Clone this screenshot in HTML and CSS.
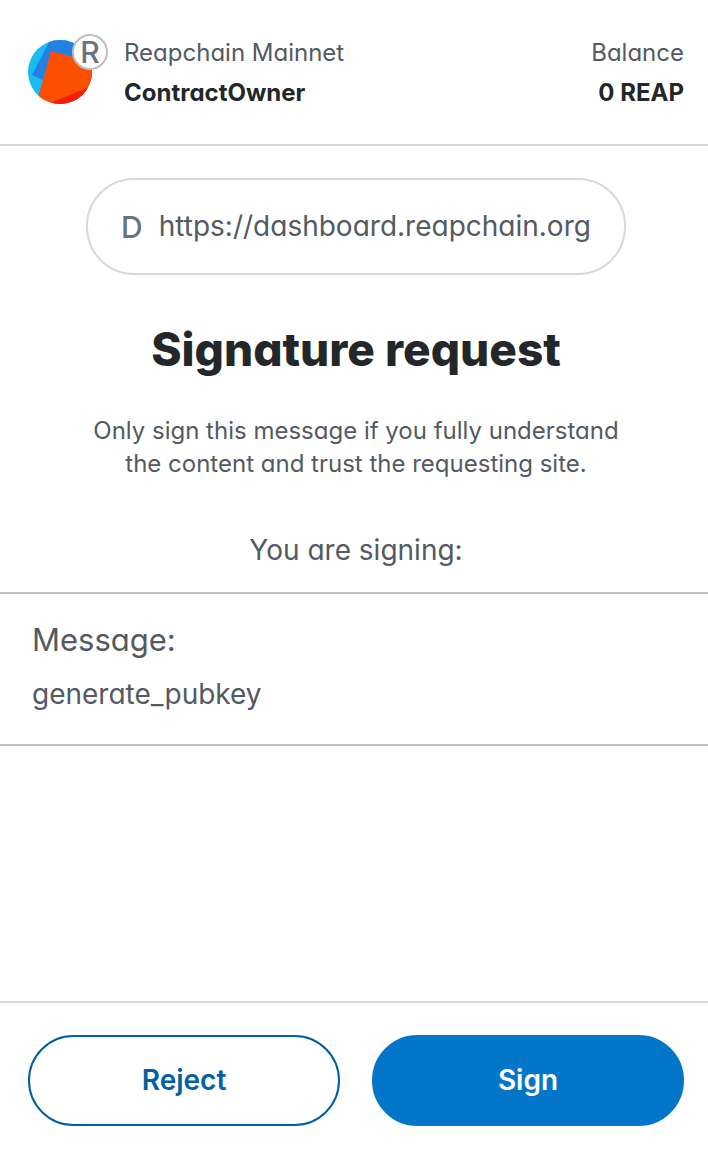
FILE: index.html
```html
<!DOCTYPE html>
<html lang="en">
<head>
<meta charset="utf-8">
<meta name="viewport" content="width=device-width, initial-scale=1">
<title>Signature request</title>
<link rel="stylesheet" href="styles.css">
</head>
<body>
<div class="request">
  <header class="account-bar">
    <div class="avatar">
      <svg class="avatar-art" viewBox="0 0 64 64" aria-hidden="true">
        <defs><clipPath id="disc"><circle cx="32" cy="32" r="32"/></clipPath></defs>
        <g clip-path="url(#disc)">
          <rect width="64" height="64" fill="#18bbf2"/>
          <path d="M22 0H64V40L35 50L4 35Z" fill="#2581e1"/>
          <path d="M23 11L64 22V64H7.500L11 54Z" fill="#fc5000"/>
          <path d="M20 64L64 46V64Z" fill="#fa1d00"/>
        </g>
      </svg>
      <span class="avatar-badge">R</span>
    </div>
    <div class="account">
      <span>Reapchain Mainnet</span>
      <strong>ContractOwner</strong>
    </div>
    <div class="account balance">
      <span>Balance</span>
      <strong>0 REAP</strong>
    </div>
  </header>
  <main class="content">
    <div class="origin">
      <span class="origin-icon">D</span>
      <span>https://dashboard.reapchain.org</span>
    </div>
    <h1 class="title">Signature request</h1>
    <p class="notice">Only sign this message if you fully understand<br>the content and trust the requesting site.</p>
    <p class="lead">You are signing:</p>
    <section class="message">
      <h2 class="message-label">Message:</h2>
      <p class="message-text">generate_pubkey</p>
    </section>
  </main>
  <footer class="actions">
    <button class="button button-outline" type="button">Reject</button>
    <button class="button button-primary" type="button">Sign</button>
  </footer>
</div>
</body>
</html>
```

FILE: styles.css
```css
* {
  box-sizing: border-box;
}

body {
  margin: 0;
  background: #fff;
  color: #535a61;
  font-family: Inter, "Open Sans", sans-serif;
  font-feature-settings: "cv11";
}

.request {
  display: flex;
  flex-direction: column;
  min-height: 100vh;
}

.account-bar {
  display: flex;
  align-items: flex-start;
  gap: 32px;
  padding: 33px 24px 31px 28px;
  border-bottom: 2px solid #d6d9dc;
}

.avatar {
  position: relative;
  width: 64px;
  height: 64px;
  margin-top: 7px;
}

.avatar-art {
  display: block;
  width: 100%;
  height: 100%;
}

.avatar-badge {
  position: absolute;
  top: -6px;
  right: -16px;
  display: flex;
  align-items: center;
  justify-content: center;
  width: 36px;
  height: 36px;
  border: 2px solid #bbc0c5;
  border-radius: 50%;
  background: #fff;
  color: #6a737d;
  font-size: 30px;
  font-weight: 500;
  line-height: 32px;
}

.account {
  display: flex;
  flex-direction: column;
  font-size: 24px;
  line-height: 40px;
}

.account strong {
  color: #24272a;
  font-weight: 700;
}

.balance {
  margin-left: auto;
  text-align: right;
}

.content {
  display: flex;
  flex: 1;
  flex-direction: column;
  padding-top: 32px;
  text-align: center;
}

.origin {
  display: flex;
  align-items: center;
  align-self: center;
  gap: 16px;
  margin-left: 4px;
  padding: 28px 33px;
  border: 2px solid #d6d9dc;
  border-radius: 48px;
  font-size: 28px;
  line-height: 37px;
}

.origin-icon {
  padding-top: 2px;
  color: #6a737d;
  font-size: 30px;
  font-weight: 500;
  line-height: 35px;
}

.title {
  margin: 40px 0 0 4px;
  color: #24272a;
  font-size: 46px;
  font-weight: 800;
  line-height: 68px;
}

.notice {
  margin: 31px 0 0 4px;
  font-size: 24px;
  line-height: 33px;
}

.lead {
  margin: 48px 0 0 4px;
  font-size: 28px;
  line-height: 44px;
}

.message {
  margin-top: 20px;
  padding: 24px 32px 30px;
  border: solid #bbc0c5;
  border-width: 2px 0;
  text-align: left;
}

.message-label {
  margin: 0;
  font-size: 31px;
  font-weight: 400;
  line-height: 44px;
}

.message-text {
  margin: 12px 0 0;
  font-size: 28px;
  line-height: 40px;
}

.actions {
  display: flex;
  gap: 32px;
  padding: 32px 24px 24px 28px;
  border-top: 2px solid #d6d9dc;
}

.button {
  flex: 1;
  padding: 24px 32px;
  border: 2px solid #0376c9;
  border-radius: 48px;
  font: inherit;
  font-size: 28px;
  font-weight: 600;
  line-height: 39px;
  cursor: pointer;
}

.button-outline {
  border-color: #0260a4;
  background: #fff;
  color: #0260a4;
}

.button-primary {
  background: #0376c9;
  color: #fff;
}
```
